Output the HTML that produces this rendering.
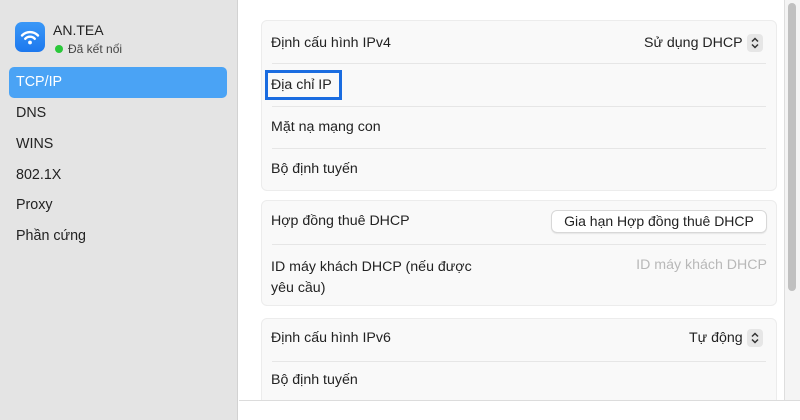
<!DOCTYPE html>
<html><head><meta charset="utf-8"><style>
*{margin:0;padding:0;box-sizing:border-box}
body{width:800px;height:420px;overflow:hidden;background:#fff;font-family:"Liberation Sans","Noto Sans CJK SC",sans-serif;font-size:14px;color:#222;position:relative}
.side{position:absolute;left:0;top:0;width:238px;height:420px;background:#e4e4e4;border-right:1px solid #d2d2d2}
.icon{position:absolute;left:15px;top:22px;width:30px;height:30px;border-radius:7px;background:linear-gradient(#3a98f7,#1d78ee)}
.name{position:absolute;left:53px;top:22px;font-size:14px;color:#222}
.stat{position:absolute;left:55px;top:42px;font-size:12px;color:#444}
.stat i{display:inline-block;width:8px;height:8px;border-radius:50%;background:#2ac83a;margin-right:5px;vertical-align:0}
.item{position:absolute;left:16px;font-size:14.3px;color:#222}
.sel{position:absolute;left:9px;top:67px;width:218px;height:31px;background:#4aa3f5;border-radius:5px;color:#fff;padding:7px 7px;font-size:14.3px}
.card{position:absolute;left:261px;width:516px;background:#f9f9f9;border:1px solid #ececec;border-radius:6px}
.row{position:absolute;left:10px;right:10px;border-bottom:1px solid #e6e6e6}
.t{position:absolute;left:271px;font-size:14.2px;color:#222}
.r{position:absolute;font-size:14.2px;color:#222}
.step{position:absolute;width:16px;height:18px;background:#e6e6e6;border-radius:4px}
.foot{position:absolute;left:239px;top:400px;width:561px;height:20px;background:#fff;border-top:1px solid #dcdcdc}
.track{position:absolute;left:784px;top:0;width:16px;height:400px;background:#f4f4f4;border-left:1px solid #dedede}
.thumb{position:absolute;left:788px;top:3px;width:8px;height:288px;background:#c0c0c0;border-radius:4px}
</style></head><body>
<div class="side">
<div class="icon"><svg width="30" height="30" viewBox="0 0 30 30"><g fill="none" stroke="#fff" stroke-width="2.4" stroke-linecap="round"><path d="M7 13.5a11 11 0 0 1 16 0"/><path d="M10.2 16.8a6.5 6.5 0 0 1 9.6 0"/></g><circle cx="15" cy="20.5" r="1.9" fill="#fff"/></svg></div>
<div class="name">AN.TEA</div>
<div class="stat"><i></i>Đã kết nối</div>
<div class="sel">TCP/IP</div>
<div class="item" style="top:105px">DNS</div>
<div class="item" style="top:136px">WINS</div>
<div class="item" style="top:167px">802.1X</div>
<div class="item" style="top:197px">Proxy</div>
<div class="item" style="top:228px">Phần cứng</div>
</div>
<div class="card" style="top:20px;height:171px">
<div class="row" style="top:42px"></div><div class="row" style="top:85px"></div><div class="row" style="top:127px"></div>
</div>
<div class="t" style="top:35px">Định cấu hình IPv4</div>
<div class="r" style="left:644px;top:35px">Sử dụng DHCP</div>
<div class="step" style="left:747px;top:34px"><svg width="16" height="18"><path d="M5 7.5l3-3 3 3M5 10.5l3 3 3-3" fill="none" stroke="#333" stroke-width="1.5"/></svg></div>
<div style="position:absolute;left:265px;top:70px;width:77px;height:30px;border:3px solid #1a6ce0"></div>
<div class="t" style="top:77px">Địa chỉ IP</div>
<div class="t" style="top:119px">Mặt nạ mạng con</div>
<div class="t" style="top:161px">Bộ định tuyến</div>
<div class="card" style="top:200px;height:106px">
<div class="row" style="top:43px"></div>
</div>
<div class="t" style="top:213px">Hợp đồng thuê DHCP</div>
<div style="position:absolute;left:551px;top:210px;width:216px;height:23px;background:#fff;border:1px solid #d8d8d8;border-radius:6px;box-shadow:0 1px 1px rgba(0,0,0,.08);font-size:14px;text-align:center;line-height:21px">Gia hạn Hợp đồng thuê DHCP</div>
<div class="t" style="top:257px;line-height:21px">ID máy khách DHCP (nếu được<br>yêu cầu)</div>
<div class="r" style="left:634px;width:133px;text-align:right;top:257px;color:#b8b8b8">ID máy khách DHCP</div>
<div class="card" style="top:318px;height:100px">
<div class="row" style="top:42px"></div>
</div>
<div class="t" style="top:330px">Định cấu hình IPv6</div>
<div class="r" style="left:689px;top:330px">Tự động</div>
<div class="step" style="left:747px;top:329px"><svg width="16" height="18"><path d="M5 7.5l3-3 3 3M5 10.5l3 3 3-3" fill="none" stroke="#333" stroke-width="1.5"/></svg></div>
<div class="t" style="top:372px">Bộ định tuyến</div>
<div class="track"></div><div class="thumb"></div>
<div class="foot"></div>
</body></html>
